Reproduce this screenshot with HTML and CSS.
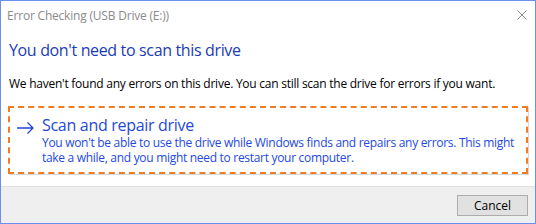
FILE: index.html
```html
<!DOCTYPE html>
<html>
<head>
<meta charset="utf-8">
<link rel="stylesheet" href="styles.css">
</head>
<body>
<div class="window">
  <div class="titlebar">
    <span class="title">Error Checking (USB Drive (E:))</span>
    <svg class="close" width="10" height="10" viewBox="0 0 10 10"><path d="M0.5 0.5L9.5 9.5M9.5 0.5L0.5 9.5" stroke="#8a8a8a" stroke-width="1"/></svg>
  </div>
  <div class="content">
    <h1 class="instruction">You don't need to scan this drive</h1>
    <p class="message">We haven't found any errors on this drive. You can still scan the drive for errors if you want.</p>
    <div class="command">
      <div class="command-row">
        <svg class="arrow" width="17" height="12" viewBox="0 0 17 12"><path d="M0 6H16M10.5 0.5L16 6L10.5 11.5" fill="none" stroke="#1f47d8" stroke-width="1.3"/></svg>
        <div class="command-text">
          <div class="command-title">Scan and repair drive</div>
          <div class="command-desc">You won't be able to use the drive while Windows finds and repairs any errors. This might take a while, and you might need to restart your computer.</div>
        </div>
      </div>
    </div>
  </div>
  <div class="footer">
    <button class="btn">Cancel</button>
  </div>
</div>
</body>
</html>
```

FILE: styles.css
```css
html, body {
  margin: 0;
  padding: 0;
  background: #ffffff;
}
.window {
  width: 536px;
  height: 224px;
  box-sizing: border-box;
  border: 1px solid #6b8fec;
  display: flex;
  flex-direction: column;
  font-family: "Open Sans", "Noto Sans", sans-serif;
  font-size: 12px;
  background: #fff;
}
.titlebar {
  height: 29px;
  display: flex;
  align-items: center;
  justify-content: space-between;
  padding: 0 8px 0 6px;
}
.title {
  color: #8b8b8b;
  font-size: 12px;
  letter-spacing: -0.2px;
}
.close {
  margin-top: -2px;
}
.content {
  flex: 1;
  padding: 0 7px;
}
.instruction {
  margin: 10px 0 0 1px;
  font-size: 16px;
  font-weight: normal;
  color: #1b3cb4;
  line-height: 21px;
  letter-spacing: -0.35px;
}
.message {
  margin: 15px 0 0 1px;
  color: #000;
  line-height: 16px;
  letter-spacing: -0.25px;
}
.command {
  margin-top: 14px;
  border: 2px dashed #ef7b22;
  box-shadow: 1px 1px 0 #d8d8d8;
  padding: 7px 2px 8px 7px;
  height: 68px;
  box-sizing: border-box;
}
.command-row {
  display: flex;
  align-items: flex-start;
}
.arrow {
  margin-top: 7px;
  margin-right: 8px;
  flex-shrink: 0;
}
.command-title {
  font-size: 16px;
  color: #1f47d8;
  line-height: 20px;
  letter-spacing: -0.3px;
}
.command-desc {
  color: #2449e0;
  line-height: 15px;
  letter-spacing: -0.3px;
}
.footer {
  height: 36px;
  background: #efefef;
  border-top: 1px solid #dfdfdf;
  display: flex;
  align-items: center;
  justify-content: flex-end;
  padding-right: 7px;
}
.btn {
  width: 71px;
  height: 21px;
  background: #e1e1e1;
  border: 1px solid #adadad;
  font-family: "Open Sans", "Noto Sans", sans-serif;
  font-size: 12px;
  color: #000;
  padding: 0;
  margin-top: 1px;
}
```
